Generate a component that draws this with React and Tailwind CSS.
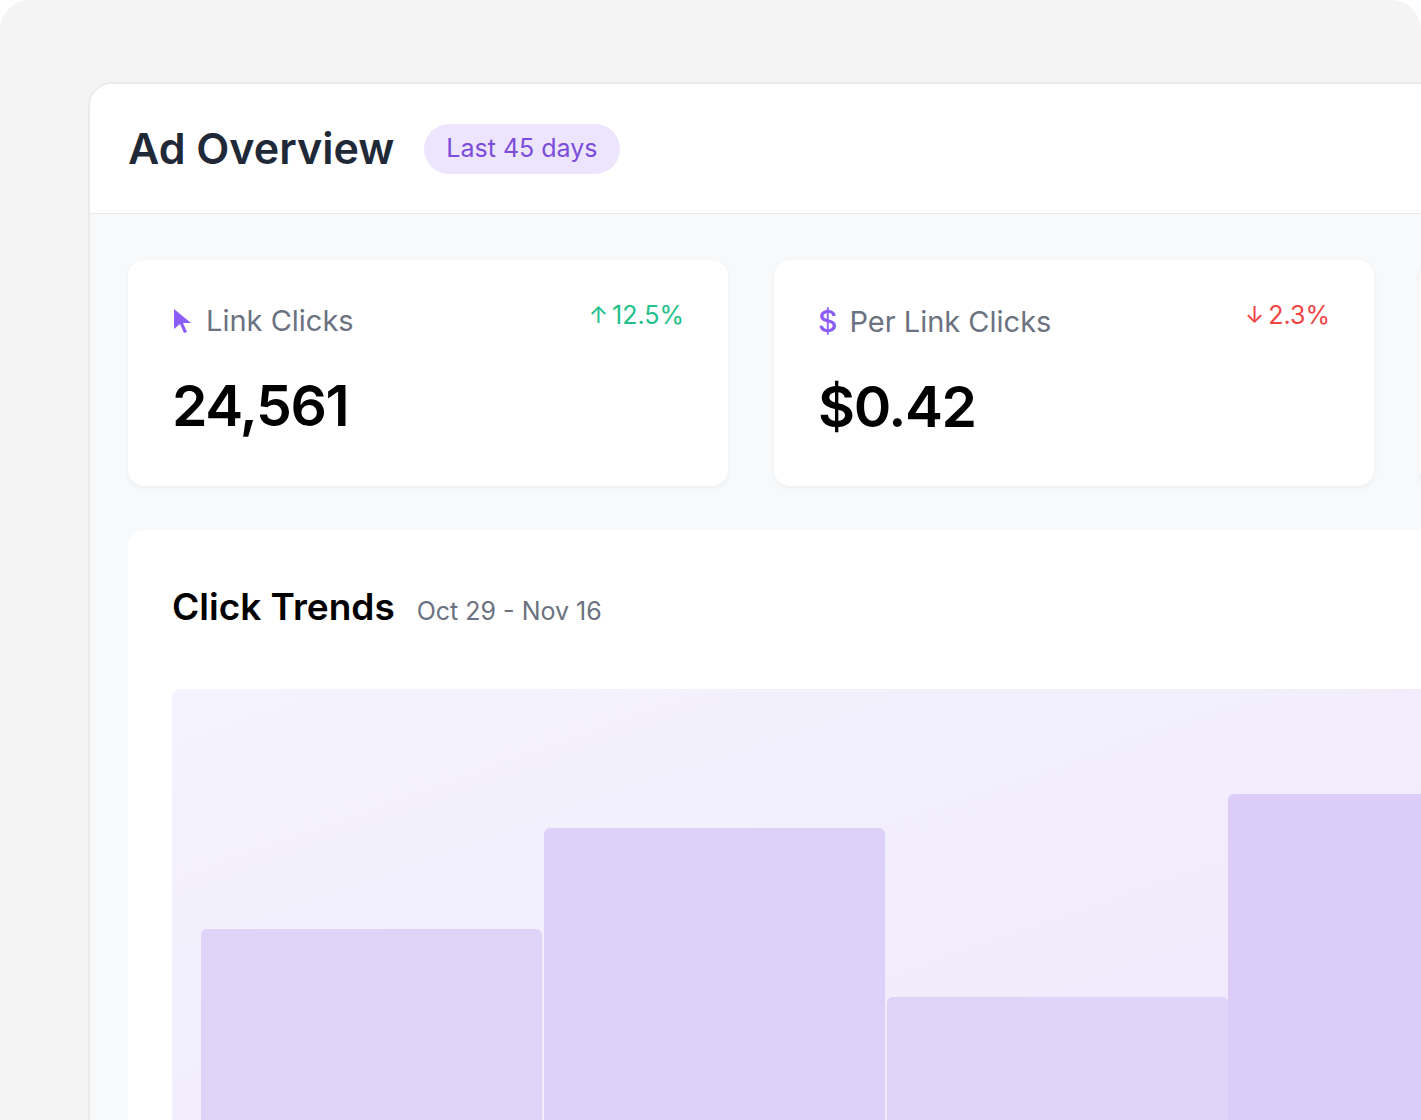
import React from "react";

function Card({ icon, label, delta, up, value }) {
  return (
    <div className="w-[600px] shrink-0 h-[226px] bg-white rounded-2xl shadow-[0_2px_6px_rgba(0,0,0,0.05)] px-[44px] pt-[46px]">
      <div className="flex items-start justify-between">
        <div className="flex items-center gap-[12px]">
          {icon}
          <span className="text-[29px] text-[#6b7280] leading-none">{label}</span>
        </div>
        {delta && (
          <span className={`text-[25px] leading-none flex items-center gap-[4px] -mt-[3px] ${up ? "text-[#22c08a]" : "text-[#ef4444]"}`}>
            <span className="text-[23px]">{up ? "↑" : "↓"}</span>{delta}
          </span>
        )}
      </div>
      <div className="mt-[42px] text-[57px] font-semibold text-black leading-none tracking-tight">{value}</div>
    </div>
  );
}

export default function App() {
  return (
    <div className="w-[1421px] h-[1120px] bg-white overflow-hidden" style={{ fontFamily: "Inter, 'Liberation Sans', sans-serif" }}>
      <div className="w-[1421px] h-[1120px] bg-[#f4f4f4] rounded-t-[30px] pl-[88px] pt-[82px] overflow-hidden">
        <div className="h-full bg-[#f8f9fb] rounded-tl-[24px] border-l-2 border-t-2 border-[#ebebeb] overflow-hidden">
          <div className="h-[130px] bg-white border-b border-[#e8eaee] flex items-center pl-[38px] gap-[30px]">
            <h1 className="text-[43px] font-semibold text-[#1f2937] leading-none">Ad Overview</h1>
            <span className="bg-[#ede5fd] text-[#7c4ddb] text-[25px] rounded-full px-[22px] h-[50px] flex items-center">Last 45 days</span>
          </div>
          <div className="pl-[38px] pt-[46px]">
            <div className="flex gap-[46px]">
              <Card
                icon={<svg width="22" height="28" viewBox="0 0 22 28"><path d="M2 2 L19 16 L11 16 L15 25 L12 26 L8 17 L2 22 Z" fill="#8b5cf6" /></svg>}
                label="Link Clicks" delta="12.5%" up value="24,561" />
              <Card
                icon={<span className="text-[30px] text-[#8b5cf6] leading-none font-medium">$</span>}
                label="Per Link Clicks" delta="2.3%" value="$0.42" />
              <Card icon={null} label="" delta="" up value="" />
            </div>
            <div className="mt-[44px] bg-white rounded-tl-2xl h-[600px] pl-[44px] pt-[58px]">
              <div className="flex items-baseline gap-[22px]">
                <h2 className="text-[37px] font-semibold text-black leading-none">Click Trends</h2>
                <span className="text-[25px] text-[#6b7280]">Oct 29 - Nov 16</span>
              </div>
              <div className="mt-[58px] h-[440px] bg-gradient-to-br from-[#f5f3fd] to-[#efe9fc] rounded-tl-lg flex items-end pl-[29px]">
                <div className="w-[341px] shrink-0 h-[200px] bg-[#dfd3f8] rounded-t-md" />
                <div className="w-[341px] shrink-0 h-[301px] bg-[#ddd0f9] rounded-t-md ml-[2px]" />
                <div className="w-[341px] shrink-0 h-[132px] bg-[#dfd3f8] rounded-t-md ml-[2px]" />
                <div className="w-[341px] shrink-0 h-[335px] bg-[#dbcdf8] rounded-t-md" />
              </div>
            </div>
          </div>
        </div>
      </div>
    </div>
  );
}
